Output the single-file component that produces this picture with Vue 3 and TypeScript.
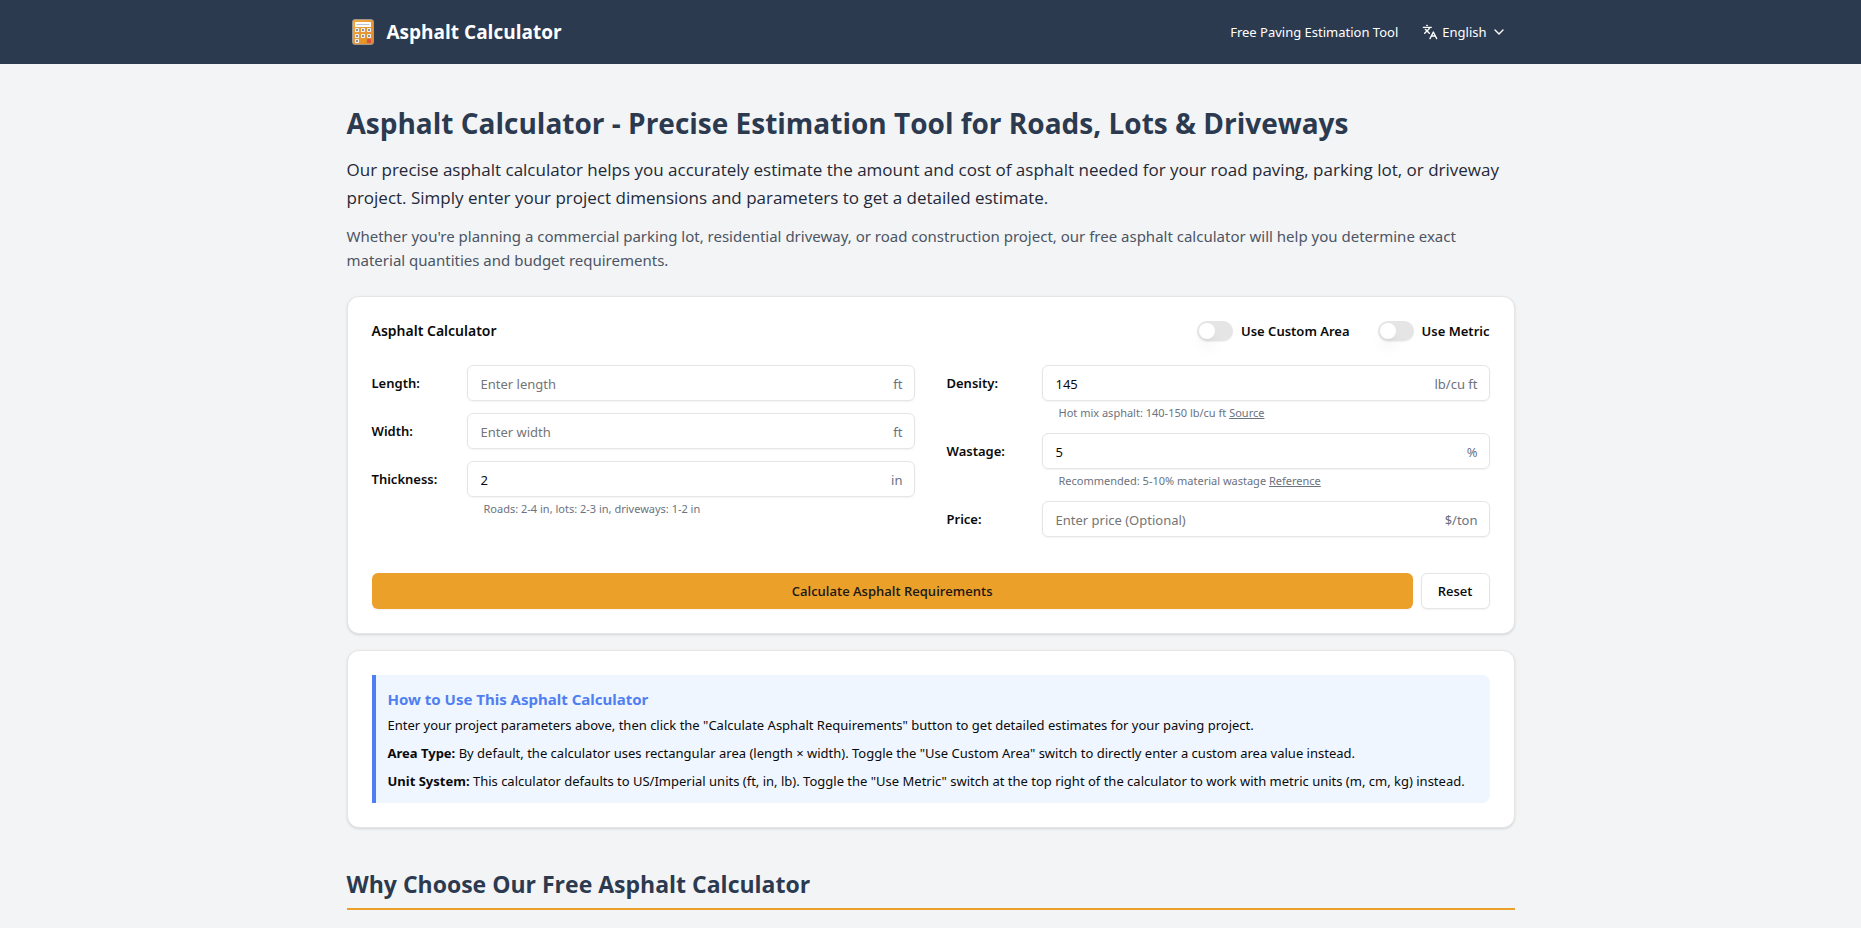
<script setup lang="ts">
import { computed, reactive, ref } from 'vue'

interface Field {
  id: 'length' | 'width' | 'thickness' | 'density' | 'wastage' | 'price'
  label: string
  placeholder?: string
  imperial: string
  metric: string
  hint?: string
  link?: string
}

const dimensionFields: Field[] = [
  { id: 'length', label: 'Length:', placeholder: 'Enter length', imperial: 'ft', metric: 'm' },
  { id: 'width', label: 'Width:', placeholder: 'Enter width', imperial: 'ft', metric: 'm' },
  { id: 'thickness', label: 'Thickness:', imperial: 'in', metric: 'cm', hint: 'Roads: 2-4 in, lots: 2-3 in, driveways: 1-2 in' },
]

const materialFields: Field[] = [
  { id: 'density', label: 'Density:', imperial: 'lb/cu ft', metric: 'kg/m³', hint: 'Hot mix asphalt: 140-150 lb/cu ft', link: 'Source' },
  { id: 'wastage', label: 'Wastage:', imperial: '%', metric: '%', hint: 'Recommended: 5-10% material wastage', link: 'Reference' },
  { id: 'price', label: 'Price:', placeholder: 'Enter price (Optional)', imperial: '$/ton', metric: '$/ton' },
]

const columns = [dimensionFields, materialFields]
const defaults = { length: '', width: '', thickness: '2', density: '145', wastage: '5', price: '' }
const values = reactive({ ...defaults })
const customArea = ref(false)
const metric = ref(false)
const unitSystem = computed<'metric' | 'imperial'>(() => (metric.value ? 'metric' : 'imperial'))

const keys = [12, 18, 23].flatMap((y, row) =>
  [8, 14, 20].map((x, col) => ({
    x,
    y,
    fill: row === 2 && col === 1 ? '#e8981c' : row === 2 && col === 2 ? '#e0523c' : '#f1f1f1',
    mark: row < 2 || col === 0,
  })),
)

function reset() {
  Object.assign(values, defaults)
}
</script>

<template>
  <div class="page">
    <header class="topbar">
      <div class="container topbar-inner">
        <a class="brand" href="#">
          <svg class="logo" viewBox="0 0 32 32" aria-hidden="true">
            <defs>
              <linearGradient id="body-fill" x1="0" y1="0" x2="1" y2="1">
                <stop offset="0" stop-color="#f3ab3c" />
                <stop offset="1" stop-color="#dd8730" />
              </linearGradient>
            </defs>
            <rect x="5.5" y="3.5" width="21" height="25" rx="2.5" fill="url(#body-fill)" stroke="#a1968c" />
            <rect x="8" y="6" width="16" height="5" rx="0.5" fill="#fbfbfb" />
            <rect x="9.5" y="8" width="13" height="1" fill="#bcc3cf" />
            <g v-for="key in keys" :key="`${key.x}-${key.y}`">
              <rect :x="key.x" :y="key.y" width="4" height="4" rx="0.4" :fill="key.fill" />
              <rect v-if="key.mark" :x="key.x + 1" :y="key.y + 1" width="2" height="2" fill="#8d939c" />
            </g>
          </svg>
          <span>Asphalt Calculator</span>
        </a>
        <nav class="topnav">
          <a class="tagline" href="#">Free Paving Estimation Tool</a>
          <button class="language" type="button" aria-haspopup="listbox">
            <svg class="icon" viewBox="0 0 24 24" aria-hidden="true">
              <path d="m5 8 6 6M4 14l6-6 2-3M2 5h12M7 2h1M22 22l-5-10-5 10M14 18h6" />
            </svg>
            <span>English</span>
            <svg class="icon" viewBox="0 0 24 24" aria-hidden="true">
              <path d="m6 9 6 6 6-6" />
            </svg>
          </button>
        </nav>
      </div>
    </header>

    <main class="container content">
      <h1>Asphalt Calculator - Precise Estimation Tool for Roads, Lots &amp; Driveways</h1>
      <p class="lead">
        Our precise asphalt calculator helps you accurately estimate the amount and cost of asphalt needed for your
        road paving, parking lot, or driveway project. Simply enter your project dimensions and parameters to get a
        detailed estimate.
      </p>
      <p class="sublead">
        Whether you're planning a commercial parking lot, residential driveway, or road construction project, our free
        asphalt calculator will help you determine exact material quantities and budget requirements.
      </p>

      <form class="card" @submit.prevent>
        <div class="card-head">
          <h2 class="card-title">Asphalt Calculator</h2>
          <div class="switches">
            <label class="switch"><input v-model="customArea" type="checkbox" role="switch" />Use Custom Area</label>
            <label class="switch"><input v-model="metric" type="checkbox" role="switch" />Use Metric</label>
          </div>
        </div>

        <div class="columns">
          <div v-for="(fields, index) in columns" :key="index" class="column">
            <div v-for="field in fields" :key="field.id" class="field">
              <label :for="field.id">{{ field.label }}</label>
              <div class="control">
                <input :id="field.id" v-model="values[field.id]" type="text" inputmode="decimal" :placeholder="field.placeholder" />
                <span class="unit">{{ field[unitSystem] }}</span>
              </div>
              <p v-if="field.hint" class="hint">
                {{ field.hint }} <a v-if="field.link" href="#">{{ field.link }}</a>
              </p>
            </div>
          </div>
        </div>

        <div class="actions">
          <button class="primary" type="submit">Calculate Asphalt Requirements</button>
          <button class="secondary" type="button" @click="reset">Reset</button>
        </div>
      </form>

      <section class="card">
        <div class="note">
          <h3>How to Use This Asphalt Calculator</h3>
          <p>
            Enter your project parameters above, then click the "Calculate Asphalt Requirements" button to get detailed
            estimates for your paving project.
          </p>
          <p>
            <strong>Area Type:</strong> By default, the calculator uses rectangular area (length × width). Toggle the
            "Use Custom Area" switch to directly enter a custom area value instead.
          </p>
          <p>
            <strong>Unit System:</strong> This calculator defaults to US/Imperial units (ft, in, lb). Toggle the "Use
            Metric" switch at the top right of the calculator to work with metric units (m, cm, kg) instead.
          </p>
        </div>
      </section>

      <h2 class="section-title">Why Choose Our Free Asphalt Calculator</h2>
    </main>
  </div>
</template>

<style>
body {
  margin: 0;
  background: #f3f4f6;
}
</style>

<style scoped>
.page {
  --navy: #2c3a50;
  --line: #e5e5e5;
  --orange: #eba02a;
  --display: 'Open Sans', 'Noto Sans', sans-serif;
  color: #0a0a0a;
  font-family: 'Noto Sans', 'Open Sans', sans-serif;
  font-size: 13px;
  line-height: 20px;
}

.page *,
.page *::before {
  box-sizing: border-box;
}

h1,
h2,
h3,
p {
  margin: 0;
}

button,
input {
  font: inherit;
  color: inherit;
}

.container {
  max-width: 1200px;
  margin: 0 auto;
  padding: 0 16px;
}

.topbar {
  background: var(--navy);
  color: #fff;
}

.topbar-inner {
  display: flex;
  align-items: center;
  justify-content: space-between;
  min-height: 64px;
}

.brand {
  display: flex;
  align-items: center;
  gap: 8px;
  color: inherit;
  font-family: var(--display);
  font-size: 19px;
  font-weight: 700;
  line-height: 28px;
  text-decoration: none;
}

.logo {
  width: 32px;
  height: 32px;
}

.topnav {
  display: flex;
  align-items: center;
  gap: 16px;
}

.tagline {
  color: inherit;
  text-decoration: none;
}

.language {
  display: flex;
  align-items: center;
  gap: 4px;
  padding: 4px 8px;
  border: 0;
  background: none;
}

.icon {
  width: 16px;
  height: 16px;
  fill: none;
  stroke: currentColor;
  stroke-width: 2;
  stroke-linecap: round;
  stroke-linejoin: round;
}

.container.content {
  padding-top: 40px;
}

h1 {
  margin-bottom: 14px;
  color: var(--navy);
  font-family: var(--display);
  font-size: 28px;
  font-weight: 700;
  line-height: 38px;
}

.lead {
  margin-bottom: 12px;
  color: #1f2937;
  font-family: var(--display);
  font-size: 17px;
  line-height: 28px;
}

.sublead {
  margin-bottom: 24px;
  color: #4b5563;
  font-size: 15px;
  line-height: 24px;
}

.card {
  margin-bottom: 16px;
  padding: 24px;
  border: 1px solid var(--line);
  border-radius: 12px;
  background: #fff;
  box-shadow: 0 1px 3px rgba(0, 0, 0, 0.1), 0 1px 2px -1px rgba(0, 0, 0, 0.1);
}

.card-head {
  display: flex;
  align-items: center;
  justify-content: space-between;
  margin-bottom: 24px;
}

.card-title {
  font-size: 14px;
  font-weight: 600;
  line-height: 20px;
}

.switches {
  display: flex;
  gap: 28px;
}

.switch {
  display: flex;
  align-items: center;
  gap: 8px;
  font-weight: 600;
}

.switch input {
  display: flex;
  appearance: none;
  width: 36px;
  height: 20px;
  margin: 0;
  padding: 2px;
  border-radius: 10px;
  background: var(--line);
  box-shadow: 0 1px 2px rgba(0, 0, 0, 0.06);
}

.switch input::before {
  content: '';
  width: 16px;
  height: 16px;
  border-radius: 50%;
  background: #fff;
  box-shadow: 0 10px 15px -3px rgba(0, 0, 0, 0.1), 0 4px 6px -4px rgba(0, 0, 0, 0.1);
}

.switch input:checked {
  justify-content: flex-end;
  background: var(--orange);
}

.columns {
  display: grid;
  grid-template-columns: 1fr 1fr;
  gap: 32px;
}

.column {
  display: flex;
  flex-direction: column;
  gap: 12px;
}

.field {
  display: grid;
  grid-template-columns: 79px 1fr;
  column-gap: 16px;
  row-gap: 4px;
  align-items: center;
}

.field label {
  font-weight: 600;
}

.control {
  display: flex;
  align-items: center;
  height: 36px;
  padding-right: 11px;
  border: 1px solid var(--line);
  border-radius: 6px;
  box-shadow: 0 1px 2px rgba(0, 0, 0, 0.05);
}

.control input {
  flex: 1;
  min-width: 0;
  height: 100%;
  padding: 2px 13px 0;
  border: 0;
  background: none;
  outline: none;
}

.control input::placeholder {
  color: #757575;
  opacity: 1;
}

.unit {
  padding-top: 2px;
  color: #6b7280;
}

.hint {
  grid-column: 2;
  padding-left: 17px;
  color: #6b7280;
  font-size: 11px;
  line-height: 16px;
}

.hint a {
  color: inherit;
}

.actions {
  display: flex;
  gap: 8px;
  margin-top: 36px;
}

.actions button {
  height: 36px;
  padding: 0 16px;
  border-radius: 6px;
  font-family: var(--display);
  font-weight: 600;
}

.primary {
  flex: 1;
  border: 0;
  background: var(--orange);
  color: #1c1917;
  box-shadow: 0 1px 2px rgba(0, 0, 0, 0.05);
}

.secondary {
  border: 1px solid var(--line);
  background: #fff;
  box-shadow: 0 1px 2px rgba(0, 0, 0, 0.05);
}

.note {
  padding: 12px;
  border-left: 4px solid #4f7ff0;
  border-radius: 0 8px 8px 0;
  background: #eff6ff;
}

.note h3 {
  margin-bottom: 4px;
  color: #4f7ff0;
  font-size: 15px;
  font-weight: 700;
  line-height: 24px;
}

.note p + p {
  margin-top: 8px;
}

.section-title {
  margin-top: 40px;
  padding-bottom: 8px;
  border-bottom: 2px solid var(--orange);
  color: var(--navy);
  font-family: var(--display);
  font-size: 23px;
  font-weight: 700;
  line-height: 32px;
}
</style>
